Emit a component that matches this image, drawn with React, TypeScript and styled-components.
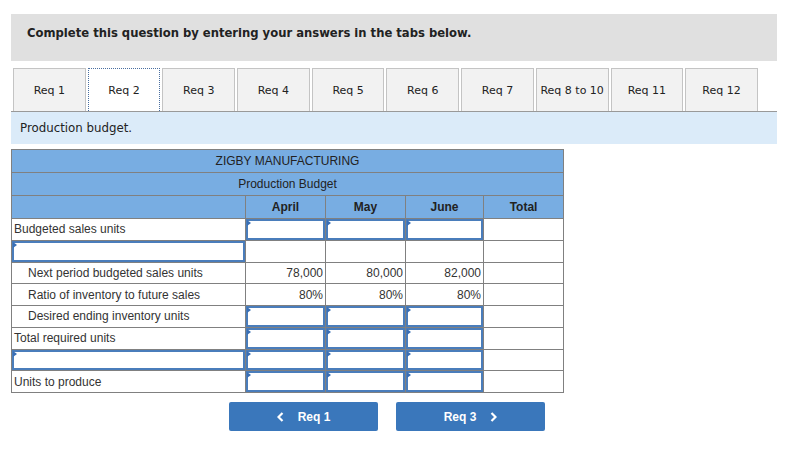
import React from "react";
import styled, { createGlobalStyle } from "styled-components";

const GlobalStyle = createGlobalStyle`
  body {
    margin: 0;
    background: #fff;
    font-family: "DejaVu Sans", Verdana, sans-serif;
  }
`;

const Page = styled.div`
  width: 766px;
  padding: 14px 0 0 11px;
`;

const Banner = styled.div`
  height: 47px;
  box-sizing: border-box;
  background: #e0e0e0;
  padding: 12px 0 0 16px;
  font-size: 11.6px;
  font-weight: bold;
  color: #222;
  margin-bottom: 7px;
`;

const TabBar = styled.div`
  display: flex;
  gap: 2px;
  padding-left: 2px;
  border-bottom: 1px solid #999;
`;

const Tab = styled.div<{ $active?: boolean }>`
  flex: 0 0 72.7px;
  height: 43px;
  box-sizing: border-box;
  display: flex;
  align-items: center;
  justify-content: center;
  font-size: 11px;
  color: #222;
  background: ${(p) => (p.$active ? "#fff" : "#f2f2f2")};
  border: ${(p) => (p.$active ? "1px dotted #4a6fa0" : "1px solid #c4c4c4")};
  border-bottom: none;
`;

const Instruction = styled.div`
  height: 32px;
  background: #dbebf9;
  display: flex;
  align-items: center;
  padding-left: 9px;
  font-size: 11.8px;
  color: #222;
  margin-bottom: 5px;
`;

const Table = styled.table`
  border-collapse: collapse;
  width: 552px;
  table-layout: fixed;
  font-family: "Liberation Sans", Arial, sans-serif;
  font-size: 12px;
  color: #333;
`;

const HeadCell = styled.th<{ $bold?: boolean }>`
  background: #78ade2;
  border: 1px solid #808080;
  height: ${(p) => (p.$bold ? "21px" : "22px")};
  padding: 0;
  font-weight: ${(p) => (p.$bold ? "bold" : "normal")};
  color: #222;
  text-align: center;
`;

const LabelCell = styled.td<{ $indent?: boolean }>`
  border: 1px solid #808080;
  height: 20.75px;
  padding: 0 0 0 ${(p) => (p.$indent ? "16px" : "2px")};
  white-space: nowrap;
`;

const NumCell = styled.td<{ $sum?: boolean }>`
  border: 1px solid #808080;
  border-top-color: ${(p) => (p.$sum ? "#000" : "#808080")};
  height: 20.75px;
  padding: 0 2px 0 0;
  text-align: right;
`;

const InputCell = styled.td<{ $sum?: boolean }>`
  border: 1px solid #808080;
  border-top-color: ${(p) => (p.$sum ? "#000" : "#808080")};
  height: 20.75px;
  padding: 0;
`;

const InputBox = styled.div`
  position: relative;
  box-sizing: border-box;
  height: 20.75px;
  border: 2px solid #4a7dbb;
  background: #fff;

  &::before {
    content: "";
    position: absolute;
    left: -1px;
    top: -1px;
    border-top: 3px solid transparent;
    border-bottom: 3px solid transparent;
    border-left: 4px solid #3a6fb5;
  }
`;

const NavRow = styled.div`
  display: flex;
  gap: 18px;
  padding: 9px 0 0 218px;
`;

const NavButton = styled.div`
  width: 149px;
  height: 29px;
  background: #3a77bb;
  border-radius: 2px;
  display: flex;
  align-items: center;
  justify-content: center;
  gap: 14px;
  color: #fff;
  font-family: "Liberation Sans", Arial, sans-serif;
  font-size: 12px;
  font-weight: bold;
`;

const Chevron = ({ dir }: { dir: "left" | "right" }) => (
  <svg width="7" height="10" viewBox="0 0 7 10">
    <polyline
      points={dir === "left" ? "5.5,1 1.5,5 5.5,9" : "1.5,1 5.5,5 1.5,9"}
      fill="none"
      stroke="#fff"
      strokeWidth="2.2"
    />
  </svg>
);

const tabs = ["Req 1", "Req 2", "Req 3", "Req 4", "Req 5", "Req 6", "Req 7", "Req 8 to 10", "Req 11", "Req 12"];

type Row =
  | { kind: "inputs"; label: string; indent?: boolean; sum?: boolean; labelInput?: boolean }
  | { kind: "values"; label: string; values: string[]; indent?: boolean };

const rows: Row[] = [
  { kind: "inputs", label: "Budgeted sales units" },
  { kind: "inputs", label: "", labelInput: true },
  { kind: "values", label: "Next period budgeted sales units", values: ["78,000", "80,000", "82,000"], indent: true },
  { kind: "values", label: "Ratio of inventory to future sales", values: ["80%", "80%", "80%"], indent: true },
  { kind: "inputs", label: "Desired ending inventory units", indent: true, sum: true },
  { kind: "inputs", label: "Total required units" },
  { kind: "inputs", label: "", labelInput: true },
  { kind: "inputs", label: "Units to produce", sum: true },
];

export default function App() {
  return (
    <Page>
      <GlobalStyle />
      <Banner>Complete this question by entering your answers in the tabs below.</Banner>
      <TabBar>
        {tabs.map((t) => (
          <Tab key={t} $active={t === "Req 2"}>{t}</Tab>
        ))}
      </TabBar>
      <Instruction>Production budget.</Instruction>
      <Table>
        <colgroup>
          <col style={{ width: 234 }} />
          <col style={{ width: 80 }} />
          <col style={{ width: 80 }} />
          <col style={{ width: 78 }} />
          <col style={{ width: 80 }} />
        </colgroup>
        <thead>
          <tr><HeadCell colSpan={5}>ZIGBY MANUFACTURING</HeadCell></tr>
          <tr><HeadCell colSpan={5}>Production Budget</HeadCell></tr>
          <tr>
            <HeadCell />
            <HeadCell $bold>April</HeadCell>
            <HeadCell $bold>May</HeadCell>
            <HeadCell $bold>June</HeadCell>
            <HeadCell $bold>Total</HeadCell>
          </tr>
        </thead>
        <tbody>
          {rows.map((r, i) =>
            r.kind === "values" ? (
              <tr key={i}>
                <LabelCell $indent={r.indent}>{r.label}</LabelCell>
                {r.values.map((v, j) => (
                  <NumCell key={j}>{v}</NumCell>
                ))}
                <NumCell />
              </tr>
            ) : (
              <tr key={i}>
                {r.labelInput ? (
                  <InputCell><InputBox /></InputCell>
                ) : (
                  <LabelCell $indent={r.indent}>{r.label}</LabelCell>
                )}
                {[0, 1, 2].map((j) => (
                  <InputCell key={j} $sum={r.sum}>
                    {i === 1 ? null : <InputBox />}
                  </InputCell>
                ))}
                <NumCell $sum={r.sum} />
              </tr>
            )
          )}
        </tbody>
      </Table>
      <NavRow>
        <NavButton><Chevron dir="left" />Req 1</NavButton>
        <NavButton>Req 3<Chevron dir="right" /></NavButton>
      </NavRow>
    </Page>
  );
}
